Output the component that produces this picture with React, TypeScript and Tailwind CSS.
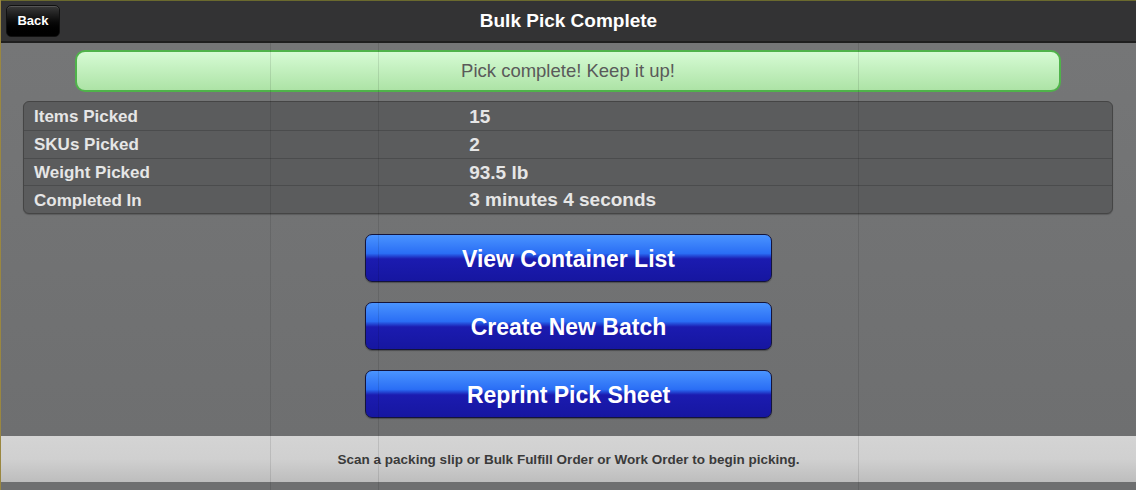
const rows = [
  ['Items Picked', '15'],
  ['SKUs Picked', '2'],
  ['Weight Picked', '93.5 lb'],
  ['Completed In', '3 minutes 4 seconds'],
]

const actions = ['View Container List', 'Create New Batch', 'Reprint Pick Sheet']

export default function App() {
  return (
    <div className="relative flex h-[490px] w-[1136px] flex-col overflow-hidden border-l border-l-[#9a8740] bg-[#727374] font-['Liberation_Sans',Arial,sans-serif]">
      {/* header */}
      <div className="relative flex h-[43px] shrink-0 items-center justify-center border-t border-t-[#6b6a2e] border-b-2 border-b-[#1f1f1f] bg-[#333334]">
        <button className="absolute left-[5px] top-[4px] h-[32px] w-[54px] rounded-[5px] border border-[#111] bg-gradient-to-b from-[#3a3a3a] via-[#0c0c0c] to-[#000] text-[13px] font-bold text-white shadow-[inset_0_1px_0_rgba(255,255,255,0.15)]">Back</button>
        <h1 className="mt-[1px] text-[19px] font-bold text-white">Bulk Pick Complete</h1>
      </div>

      {/* body */}
      <div className="flex flex-1 flex-col bg-gradient-to-b from-[#757677] to-[#6e6f70] pt-[7px]">
        <div className="ml-[74px] mr-[75px] flex h-[42px] items-center justify-center rounded-[10px] border-2 border-[#4fb34a] bg-gradient-to-b from-[#d6fbd4] to-[#ade3a6] text-[18.5px] text-[#5a5a5a]">
          Pick complete! Keep it up!
        </div>

        <div className="ml-[22px] mr-[23px] mt-[9px] overflow-hidden rounded-[6px] border border-[#454545] bg-[#5b5c5d] shadow-[0_1px_1px_rgba(0,0,0,0.2)]">
          {rows.map(([label, value], i) => (
            <div key={label} className={`flex h-[27.75px] items-center pt-[2px] ${i > 0 ? 'border-t border-[#4b4c4d]' : ''}`}>
              <div className="w-[40%] pl-[10px] text-[17px] font-bold text-[#e6e6e6]">{label}</div>
              <div className="pl-[10px] text-[19px] font-bold text-[#e6e6e6]">{value}</div>
            </div>
          ))}
        </div>

        <div className="mt-[20px] flex flex-col items-center gap-[20px]">
          {actions.map((a) => (
            <button key={a} className="h-[48px] w-[407px] rounded-[7px] border border-[#14143a] bg-[linear-gradient(to_bottom,#4a94ff_0%,#2a6ef5_40%,#1b1bb0_52%,#1616a0_100%)] pt-[2px] text-[23px] font-bold text-white shadow-[0_1px_1px_rgba(0,0,0,0.3)]">
              {a}
            </button>
          ))}
        </div>
      </div>

      {/* footer */}
      <div className="flex h-[46px] shrink-0 items-center justify-center bg-gradient-to-b from-[#d4d4d4] via-[#d0d0d0] to-[#bdbdbd] pt-[3px] text-[13.5px] font-bold text-[#3a3a3a]">
        Scan a packing slip or Bulk Fulfill Order or Work Order to begin picking.
      </div>
      <div className="h-[8px] shrink-0 bg-[#6e6f70]" />

      {/* faint overlay guides */}
      <div className="pointer-events-none absolute left-[269px] top-[43px] h-[447px] w-px bg-black/10" />
      <div className="pointer-events-none absolute left-[377px] top-[43px] h-[447px] w-px bg-black/10" />
      <div className="pointer-events-none absolute left-[857px] top-[43px] h-[447px] w-px bg-black/10" />
    </div>
  )
}
